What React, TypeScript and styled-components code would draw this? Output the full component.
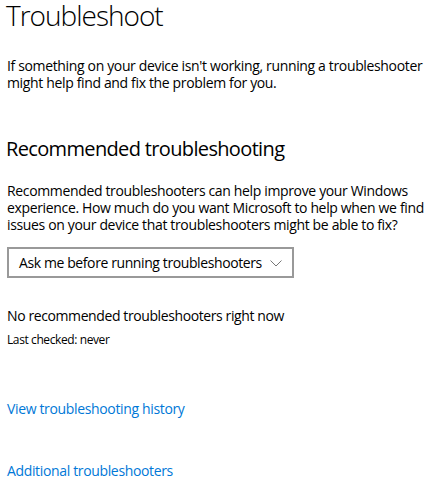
import React from 'react';
import styled, { createGlobalStyle } from 'styled-components';

const GlobalStyle = createGlobalStyle`
  html, body {
    margin: 0;
    padding: 0;
    background: #fff;
  }
  body {
    font-family: 'Open Sans', 'Noto Sans', sans-serif;
    color: #000;
  }
`;

export default function App() {
  return (
    <Page>
      <GlobalStyle />
      <Title>Troubleshoot</Title>
      <Paragraph $top={27}>
        If something on your device isn't working, running a troubleshooter
        <br />
        might help find and fix the problem for you.
      </Paragraph>

      <SectionTitle>Recommended troubleshooting</SectionTitle>
      <Paragraph $top={20}>
        Recommended troubleshooters can help improve your Windows
        <br />
        experience. How much do you want Microsoft to help when we find
        <br />
        issues on your device that troubleshooters might be able to fix?
      </Paragraph>

      <Dropdown type="button">
        <span>Ask me before running troubleshooters</span>
        <Chevron viewBox="0 0 12 7" aria-hidden="true">
          <path d="M0.5 0.5 L6 6 L11.5 0.5" />
        </Chevron>
      </Dropdown>

      <Status>No recommended troubleshooters right now</Status>
      <Caption>Last checked: never</Caption>

      <LinkText href="#" $top={52}>View troubleshooting history</LinkText>
      <LinkText href="#" $top={45}>Additional troubleshooters</LinkText>
    </Page>
  );
}

const Page = styled.div`
  display: flex;
  flex-direction: column;
  align-items: flex-start;
  padding-left: 7px;
  white-space: nowrap;
`;

const Title = styled.h1`
  margin: 0 0 0 -1px;
  font-size: 28px;
  line-height: 30px;
  font-weight: 300;
  letter-spacing: -1px;
`;

const Paragraph = styled.p<{ $top: number }>`
  margin: ${(p) => p.$top}px 0 0;
  font-size: 14px;
  line-height: 17px;
  letter-spacing: -0.35px;
`;

const SectionTitle = styled.h2`
  margin: 45px 0 0 -1px;
  font-size: 20px;
  line-height: 26px;
  font-weight: 400;
  letter-spacing: -0.65px;
`;

const Dropdown = styled.button`
  margin-top: 14px;
  width: 287px;
  height: 31px;
  box-sizing: border-box;
  border: 2px solid #999;
  background: #fff;
  padding: 0 10px;
  display: flex;
  align-items: center;
  justify-content: space-between;
  text-align: left;
  font-family: inherit;
  font-size: 14px;
  letter-spacing: -0.4px;
  color: #000;
  cursor: pointer;
`;

const Chevron = styled.svg`
  width: 12px;
  height: 7px;
  margin-top: 1px;
  fill: none;
  stroke: #777;
  stroke-width: 1;
`;

const Status = styled.div`
  margin-top: 29px;
  font-size: 14px;
  line-height: 17px;
  letter-spacing: -0.4px;
`;

const Caption = styled.div`
  margin-top: 8px;
  font-size: 12px;
  line-height: 16px;
  letter-spacing: -0.4px;
`;

const LinkText = styled.a<{ $top: number }>`
  margin-top: ${(p) => p.$top}px;
  font-size: 14px;
  line-height: 17px;
  letter-spacing: -0.35px;
  color: #0078d7;
  text-decoration: none;
  &:hover {
    text-decoration: underline;
  }
`;
